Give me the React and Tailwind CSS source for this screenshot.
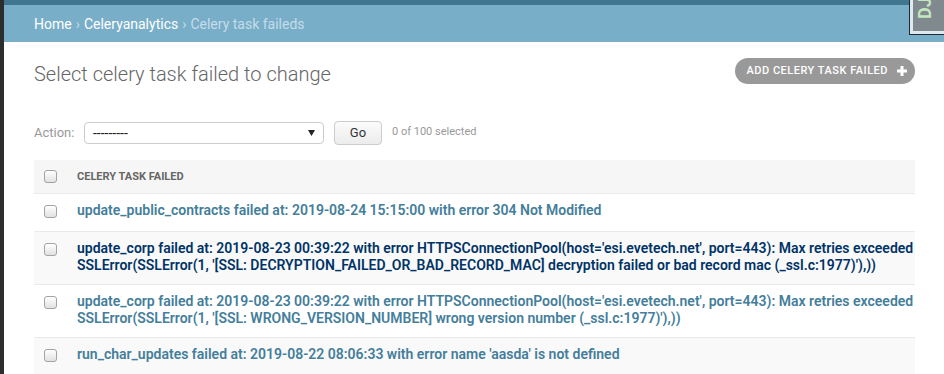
import React from 'react';

const rows = [
  {
    lines: ["update_public_contracts failed at: 2019-08-24 15:15:00 with error 304 Not Modified"],
  },
  {
    lines: [
      "update_corp failed at: 2019-08-23 00:39:22 with error HTTPSConnectionPool(host='esi.evetech.net', port=443): Max retries exceeded with url: /latest/corporations/ (Caused by",
      "SSLError(SSLError(1, '[SSL: DECRYPTION_FAILED_OR_BAD_RECORD_MAC] decryption failed or bad record mac (_ssl.c:1977)'),))",
    ],
    active: true,
  },
  {
    lines: [
      "update_corp failed at: 2019-08-23 00:39:22 with error HTTPSConnectionPool(host='esi.evetech.net', port=443): Max retries exceeded with url: /latest/corporations/ (Caused by",
      "SSLError(SSLError(1, '[SSL: WRONG_VERSION_NUMBER] wrong version number (_ssl.c:1977)'),))",
    ],
  },
  {
    lines: ["run_char_updates failed at: 2019-08-22 08:06:33 with error name 'aasda' is not defined"],
  },
];

function CheckBox() {
  return (
    <div className="w-[13px] h-[13px] rounded-[3px] border border-[#a3a3a3] bg-linear-to-b from-white to-[#e1e1e1]" />
  );
}

export default function App() {
  return (
    <div className="relative w-[944px] h-[374px] overflow-hidden bg-white flex font-[Roboto,sans-serif]">
      {/* left dark edge */}
      <div className="w-[4px] shrink-0 bg-[#2d2d2d]" />

      <div className="flex-1 flex flex-col min-w-0">
        {/* header */}
        <div className="h-[5px] shrink-0 bg-[#417690]" />
        <div className="h-[37px] shrink-0 bg-[#79aec8] flex items-center pl-[30px] text-[14px] leading-[20px]">
          <span className="text-white">Home</span>
          <span className="text-[#c4dce8] mx-[4px]">›</span>
          <span className="text-white">Celeryanalytics</span>
          <span className="text-[#c4dce8] mx-[4px]">›</span>
          <span className="text-[#c4dce8]">Celery task faileds</span>
        </div>

        {/* content */}
        <div className="shrink-0 pl-[30px] pr-[29px]">
          <div className="flex justify-between items-start pt-[16px]">
            <h1 className="mt-[4px] text-[20px] leading-[24px] font-light text-[#666]">
              Select celery task failed to change
            </h1>
            <div className="h-[26px] rounded-full bg-[#999] flex items-center pl-[12px] pr-[8px] text-white text-[11px] font-medium tracking-[0.5px] uppercase">
              Add celery task failed
              <svg width="10" height="10" viewBox="0 0 10 10" className="ml-[9px]">
                <path d="M5 0v10M0 5h10" stroke="white" strokeWidth="3" />
              </svg>
            </div>
          </div>

          {/* actions */}
          <div className="mt-[35px] h-[24px] flex items-center">
            <span className="text-[13px] text-[#999] w-[50px]">Action:</span>
            <div className="w-[240px] h-[22px] border border-[#ccc] rounded-[4px] flex items-center justify-between pl-[8px] pr-[8px] text-[14px] text-[#222]">
              <span>---------</span>
              <svg width="7" height="6" viewBox="0 0 7 6">
                <path d="M0 0h7L3.5 6z" fill="#222" />
              </svg>
            </div>
            <div className="ml-[10px] w-[48px] h-[24px] border border-[#ccc] rounded-[4px] bg-linear-to-b from-[#fbfbfb] to-[#ececec] flex items-center justify-center text-[13px] text-[#333]">
              Go
            </div>
            <span className="ml-[10px] self-start mt-[3px] text-[11px] text-[#999]">0 of 100 selected</span>
          </div>

          {/* results */}
          <div className="mt-[15px] overflow-hidden">
            <div className="h-[34px] bg-[#f6f6f6] border-b border-[#eaeaea] flex items-center">
              <div className="w-[43px] pl-[10px]">
                <CheckBox />
              </div>
              <span className="text-[11px] leading-[15px] font-bold text-[#666] uppercase">Celery task failed</span>
            </div>
            {rows.map((r, i) => (
              <div
                key={i}
                className={`flex border-b border-[#eaeaea] ${i % 2 === 1 ? 'bg-[#f9f9f9]' : 'bg-white'}`}
              >
                <div className="w-[43px] h-[37px] shrink-0 pl-[10px] pt-[11px]">
                  <CheckBox />
                </div>
                <div
                  className={`pt-[8px] pb-[10px] text-[14px] leading-[17px] font-semibold whitespace-nowrap ${
                    r.active ? 'text-[#036]' : 'text-[#447e9b]'
                  }`}
                >
                  {r.lines.map((l, j) => (
                    <div key={j}>{l}</div>
                  ))}
                </div>
              </div>
            ))}
          </div>
        </div>
      </div>

      {/* debug toolbar handle */}
      <div className="absolute top-0 right-0 w-[35px] h-[35px] border-l border-b border-[#1f2b31] bg-[#dfeaf0] pl-[3px] pb-[3px] flex">
        <div className="relative flex-1 bg-[#7f898e] overflow-hidden">
          <span className="absolute left-[5px] bottom-[12px] [writing-mode:vertical-rl] rotate-180 text-[18px] leading-[14px] font-bold text-[#c3e6bf]">
            DJDT
          </span>
        </div>
      </div>
    </div>
  );
}
